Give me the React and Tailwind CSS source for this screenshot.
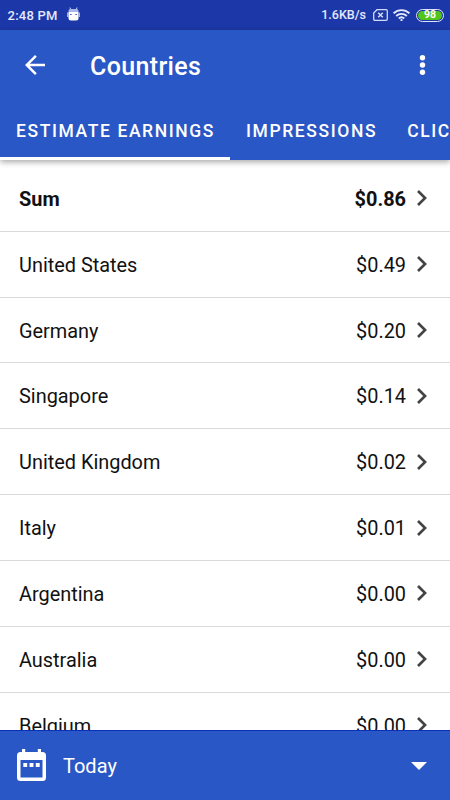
import React from 'react';

const tabs = ['ESTIMATE EARNINGS', 'IMPRESSIONS', 'CLICKS'];

const rows = [
  { name: 'Sum', value: '$0.86', total: true },
  { name: 'United States', value: '$0.49' },
  { name: 'Germany', value: '$0.20' },
  { name: 'Singapore', value: '$0.14' },
  { name: 'United Kingdom', value: '$0.02' },
  { name: 'Italy', value: '$0.01' },
  { name: 'Argentina', value: '$0.00' },
  { name: 'Australia', value: '$0.00' },
  { name: 'Belgium', value: '$0.00' },
];

function StatusBar() {
  return (
    <div className="flex h-[30px] shrink-0 items-center bg-[#1c38a8] pl-[7.5px] pr-[6px] text-[13px] font-medium text-[#e4e9fb]">
      <span className="pt-px tracking-[0.25px]">2:48 PM</span>
      <svg className="ml-[9px] -mt-[2px] h-[14px] w-[13px]" viewBox="0 0 13 14" fill="none">
        <path d="M3 .5l.7 2.200M10 .5l-.7 2.200" stroke="#c9d2f3" />
        <path d="M1.500 5V4q0-2 2-2h6q2 0 2 2v1z" fill="#a9b6e8" />
        <path d="M1.500 5h10v6q0 2.500-2.500 2.500H4Q1.500 13.500 1.500 11z" fill="#fff" />
        <path d="M.8 5.500V10M12.200 5.500V10" stroke="#dfe5f8" />
        <path d="M3.200 7.500h1.300M8.500 7.500h1.300" stroke="#1c38a8" />
      </svg>
      <span className="ml-auto pt-px text-[12.5px]">1.6KB/s</span>
      <svg className="ml-[7px] h-[12px] w-[15px]" viewBox="0 0 15 12" fill="none" stroke="#d3dbf6">
        <path d="M4 .7h9q1.300 0 1.300 1.300v8q0 1.300-1.300 1.300H2Q.7 11.300.7 10V4z" strokeWidth="1.300" />
        <path d="M5.200 3.700l4.600 4.600M9.800 3.700L5.200 8.300" strokeWidth="1.500" />
      </svg>
      <svg className="ml-[5px] h-[12px] w-[17px]" viewBox="0 0 17 12" fill="none" stroke="#e4e9fb" strokeWidth="1.900">
        <path d="M.6 4.300a11.300 11.300 0 0 1 15.800 0" />
        <path d="M3.200 7a7.600 7.600 0 0 1 10.600 0" />
        <path d="M5.800 9.500a4 4 0 0 1 5.400 0" />
        <circle cx="8.500" cy="11" r="1.100" fill="#e4e9fb" stroke="none" />
      </svg>
      <div className="ml-[6px] flex h-[13px] w-[28px] rounded-full border border-[#dfe5f8] p-px">
        <div className="flex flex-1 items-center justify-center rounded-full bg-[#52c41a] pt-px text-[10.5px] font-bold leading-none text-white">
          98
        </div>
      </div>
    </div>
  );
}

function Header() {
  return (
    <div className="relative z-10 shrink-0 bg-[#2a57c6] text-white shadow-[0_2px_6px_rgba(0,0,0,0.35)]">
      <div className="flex h-[70px] items-center pl-[25px] pr-[19px]">
        <svg className="h-[20px] w-[20px]" viewBox="4 4 16 16" fill="currentColor">
          <path d="M20 11H7.830l5.590-5.590L12 4l-8 8 8 8 1.410-1.410L7.830 13H20v-2z" />
        </svg>
        <h1 className="ml-[45px] mt-[3px] text-[25px] font-medium tracking-[0.35px]">Countries</h1>
        <svg className="ml-auto h-[20px] w-[17px]" viewBox="0 0 17 20" fill="currentColor">
          <circle cx="8.500" cy="2.700" r="2.700" />
          <circle cx="8.500" cy="10" r="2.700" />
          <circle cx="8.500" cy="17.300" r="2.700" />
        </svg>
      </div>
      <div className="flex h-[60px] overflow-hidden whitespace-nowrap text-[17.5px] font-medium tracking-[1.6px]">
        {tabs.map((tab, i) => (
          <div
            key={tab}
            className={
              i === 0
                ? 'flex w-[230px] shrink-0 items-center border-b-3 border-white pl-4 pt-[5px]'
                : 'flex shrink-0 items-center border-b-3 border-transparent pl-4 pr-[14px] pt-[5px]'
            }
          >
            {tab}
          </div>
        ))}
      </div>
    </div>
  );
}

function Row({ name, value, total }) {
  return (
    <div
      className={`flex h-[65.83px] shrink-0 items-center border-b border-[#d9d9d9] pl-[19px] pr-[23px] text-[19.9px] text-[#111] ${
        total ? 'font-bold' : ''
      }`}
    >
      <span className="pt-[3px]">{name}</span>
      <span className="ml-auto pt-[3px]">{value}</span>
      <svg className="ml-[11px] h-[16px] w-[10px]" viewBox="8.590 6 7.410 12" fill="#444">
        <path d="M8.590 16.590L13.170 12 8.590 7.410 10 6l6 6-6 6z" />
      </svg>
    </div>
  );
}

function DateBar() {
  return (
    <div className="flex h-[70px] shrink-0 items-center border-t border-[#0b2fb8] bg-[#2a57c6] pl-[17px] pr-[23px] text-xl text-white">
      <svg className="-mt-px h-[32px] w-[29px]" viewBox="0 0 29 32">
        <path
          d="M5 0h3.200v3h12.600V0H24v3h1.500Q29 3 29 6.500v22Q29 32 25.500 32h-22Q0 32 0 28.500v-22Q0 3 3.500 3H5zM3.500 11v17.500h22V11z"
          fill="currentColor"
          fillRule="evenodd"
        />
        <path d="M6.300 14h3.900v3.900H6.300zM12.550 14h3.900v3.900h-3.900zM18.800 14h3.900v3.900h-3.900z" fill="currentColor" />
      </svg>
      <span className="ml-[17px]">Today</span>
      <svg className="ml-auto h-[8px] w-[16px]" viewBox="0 0 16 8" fill="currentColor">
        <path d="M0 0h16L8 8z" />
      </svg>
    </div>
  );
}

export default function App() {
  return (
    <div className="flex h-[800px] w-[450px] flex-col overflow-hidden bg-white font-[Roboto,sans-serif]">
      <StatusBar />
      <Header />
      <div className="flex min-h-0 flex-1 flex-col overflow-hidden pt-[6px]">
        {rows.map((row) => (
          <Row key={row.name} {...row} />
        ))}
      </div>
      <DateBar />
    </div>
  );
}
